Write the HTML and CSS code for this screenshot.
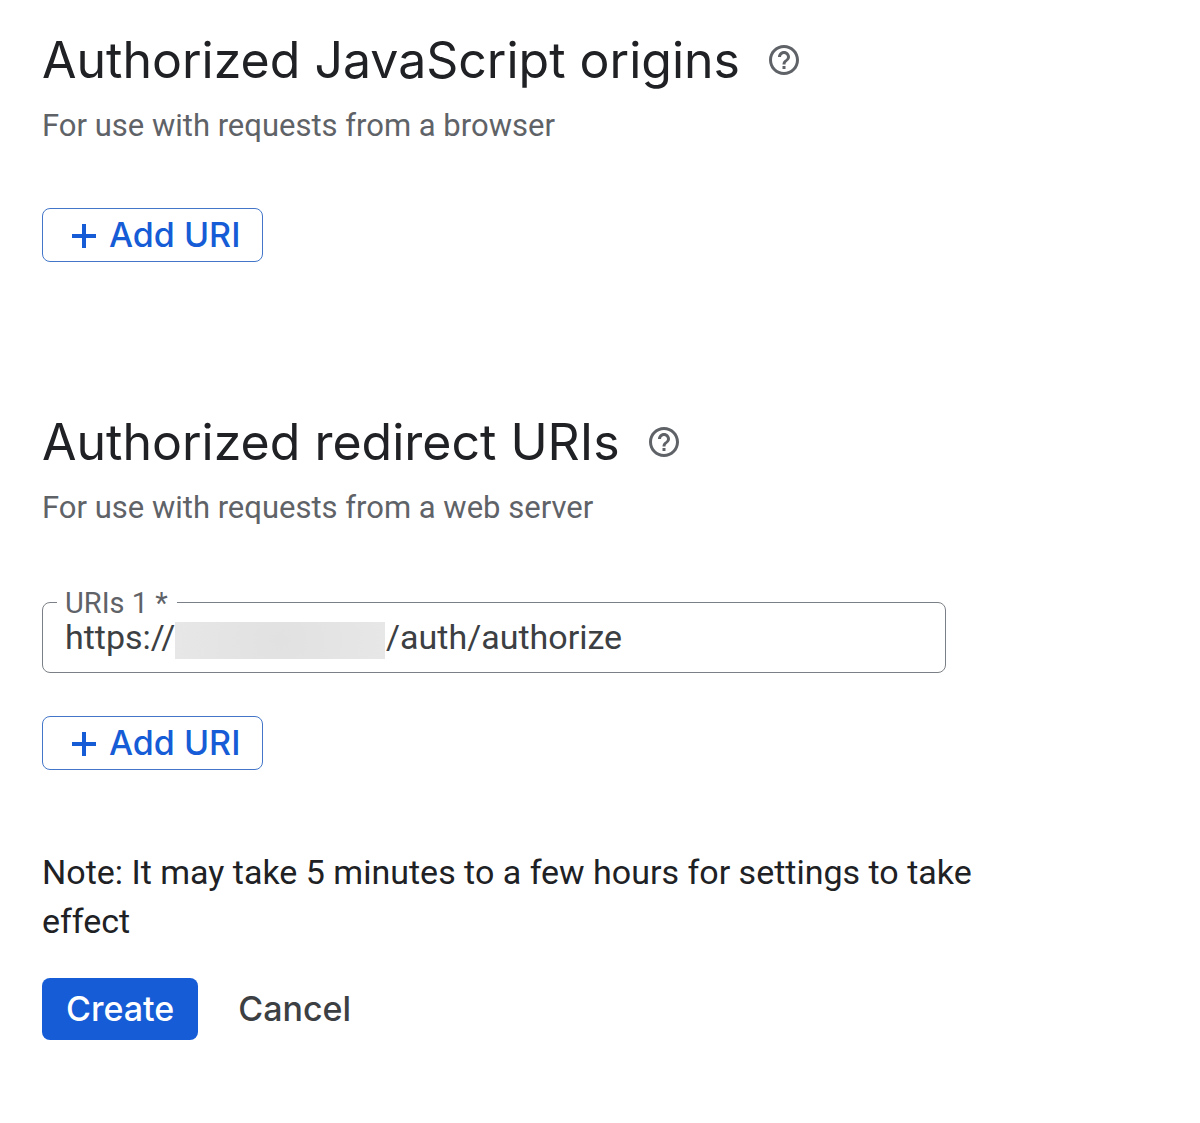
FILE: index.html
```html
<!DOCTYPE html>
<html lang="en">
<head>
<meta charset="utf-8">
<meta name="viewport" content="width=device-width, initial-scale=1">
<title>OAuth client</title>
<link rel="stylesheet" href="styles.css">
</head>
<body>
<svg class="sprite" aria-hidden="true">
  <symbol id="help" viewBox="2 2 20 20"><path d="M11 18h2v-2h-2v2zm1-16C6.480 2 2 6.480 2 12s4.480 10 10 10 10-4.480 10-10S17.520 2 12 2zm0 18c-4.410 0-8-3.590-8-8s3.590-8 8-8 8 3.590 8 8-3.590 8-8 8zm0-14c-2.210 0-4 1.790-4 4h2c0-1.100.9-2 2-2s2 .9 2 2c0 2-3 1.750-3 5h2c0-2.250 3-2.500 3-5 0-2.210-1.790-4-4-4z"/></symbol>
  <symbol id="plus" viewBox="0 0 24 24"><path d="M10 0h4v10h10v4H14v10h-4V14H0v-4h10z"/></symbol>
</svg>
<form class="client-form">
  <section class="origins">
    <div class="heading">
      <h2>Authorized JavaScript origins</h2>
      <button type="button" class="help" aria-label="Help"><svg><use href="#help"/></svg></button>
    </div>
    <p class="hint">For use with requests from a browser</p>
    <button type="button" class="btn outlined"><svg><use href="#plus"/></svg>Add URI</button>
  </section>
  <section class="redirects">
    <div class="heading">
      <h2>Authorized redirect URIs</h2>
      <button type="button" class="help" aria-label="Help"><svg><use href="#help"/></svg></button>
    </div>
    <p class="hint">For use with requests from a web server</p>
    <fieldset class="field">
      <legend><label for="uri-1">URIs 1 *</label></legend>
      <input id="uri-1" type="text" required value="https://&nbsp;&nbsp;&nbsp;&nbsp;&nbsp;&nbsp;&nbsp;&nbsp;&nbsp;&nbsp;&nbsp;&nbsp;&nbsp;&nbsp;&nbsp;&nbsp;&nbsp;&nbsp;&nbsp;&nbsp;&nbsp;&nbsp;&nbsp;&nbsp;&nbsp;/auth/authorize">
      <span class="redaction"></span>
    </fieldset>
    <button type="button" class="btn outlined"><svg><use href="#plus"/></svg>Add URI</button>
  </section>
  <p class="note">Note: It may take 5 minutes to a few hours for settings to take effect</p>
  <div class="actions">
    <button type="submit" class="btn primary">Create</button>
    <button type="button" class="btn text">Cancel</button>
  </div>
</form>
</body>
</html>
```
FILE: styles.css
```css
* {
  box-sizing: border-box;
}

body {
  margin: 0;
  background: #fff;
  color: #202124;
  font-family: Roboto, sans-serif;
}

h2, p {
  margin: 0;
}

button, input {
  font: inherit;
  color: inherit;
}

button {
  cursor: pointer;
}

svg {
  display: block;
  fill: currentColor;
}

.sprite {
  position: absolute;
  width: 0;
  height: 0;
}

.client-form {
  max-width: 1032px;
  padding: 28px 28px 28px 42px;
}

.heading {
  display: flex;
  align-items: center;
  gap: 29px;
}

.heading h2 {
  font-family: Inter, sans-serif;
  font-size: 50px;
  font-weight: 400;
  line-height: 64px;
}

.help {
  padding: 0;
  border: 0;
  background: none;
  color: #5f6368;
}

.help svg {
  width: 30px;
  height: 30px;
}

.hint {
  margin-top: 14px;
  color: #5f6368;
  font-size: 31px;
  line-height: 40px;
}

.btn {
  display: inline-flex;
  align-items: center;
  height: 62px;
  padding: 0 24px 2px;
  border: 0;
  border-radius: 8px;
  background: none;
  font-family: Inter, sans-serif;
  font-size: 34px;
  font-weight: 500;
}

.outlined {
  gap: 13px;
  height: 54px;
  padding: 0 22px 2px 29px;
  border: 1px solid #4376c9;
  color: #155cd6;
}

.outlined svg {
  width: 24px;
  height: 24px;
  margin-top: 4px;
}

.origins .outlined {
  margin-top: 62px;
}

.redirects {
  margin-top: 148px;
}

.field {
  position: relative;
  max-width: 904px;
  height: 87px;
  margin: 58px 0 43px;
  padding: 0 22px;
  border: 1px solid #7b8086;
  border-radius: 8px;
}

.field legend {
  height: 32px;
  margin-left: -8px;
  padding: 0 9px 0 8px;
  color: #5f6368;
  font-size: 29px;
  line-height: 34px;
}

.field input {
  display: block;
  width: 100%;
  height: 38px;
  padding: 0;
  border: 0;
  outline: 0;
  background: none;
  color: #3c4043;
  font-size: 34px;
}

.redaction {
  position: absolute;
  top: 4px;
  left: 132px;
  width: 210px;
  height: 37px;
  background: radial-gradient(circle, #e1e1e1, #e7e7e7);
}

.note {
  margin-top: 78px;
  font-size: 34px;
  line-height: 49px;
}

.actions {
  display: flex;
  gap: 16px;
  margin-top: 32px;
}

.primary {
  background: #155cd6;
  color: #fff;
}

.text {
  color: #3c4043;
}
```
